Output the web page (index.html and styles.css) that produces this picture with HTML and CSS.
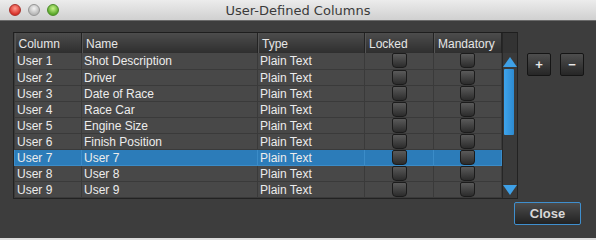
FILE: index.html
```html
<!DOCTYPE html>
<html lang="en">
<head>
    <meta charset="UTF-8">
    <title>User-Defined Columns</title>
    <link rel="stylesheet" href="styles.css">
</head>
<body>
    <div class="window">
        <div class="titlebar">
            <div class="lights">
                <span class="light red"></span>
                <span class="light gray"></span>
                <span class="light green"></span>
            </div>
            <div class="title">User-Defined Columns</div>
        </div>
        <div class="content">
            <div class="main">
                <div class="grid-wrap">
                    <table class="grid">
                        <colgroup>
                            <col class="c-col">
                            <col class="c-name">
                            <col class="c-type">
                            <col class="c-lock">
                            <col class="c-mand">
                        </colgroup>
                        <thead>
                            <tr>
                                <th>Column</th>
                                <th>Name</th>
                                <th>Type</th>
                                <th>Locked</th>
                                <th>Mandatory</th>
                            </tr>
                        </thead>
                        <tbody id="rows"></tbody>
                    </table>
                    <div class="scroll">
                        <div class="scroll-head"></div>
                        <div class="scroll-track">
                            <span class="arrow up"></span>
                            <span class="thumb"></span>
                            <span class="arrow down"></span>
                        </div>
                    </div>
                </div>
                <div class="side">
                    <button class="small">+</button>
                    <button class="small">&minus;</button>
                </div>
            </div>
            <div class="footer">
                <button class="close">Close</button>
            </div>
        </div>
    </div>

    <script>
        const nomes = ['Shot Description', 'Driver', 'Date of Race', 'Race Car', 'Engine Size', 'Finish Position', 'User 7', 'User 8', 'User 9'];
        const tbody = document.getElementById('rows');
        nomes.forEach((nome, i) => {
            let tr = document.createElement('tr');
            if (i === 6) tr.className = 'selected';
            tr.innerHTML = `<td>User ${i + 1}</td><td>${nome}</td><td>Plain Text</td><td class="center"><span class="check"></span></td><td class="center"><span class="check"></span></td>`;
            tbody.appendChild(tr);
        });
    </script>
</body>
</html>
```

FILE: styles.css
```css
body {
    margin: 0;
    background-color: #3d3d3d;
    font-family: 'Liberation Sans', Arial, sans-serif;
    color: #ececec;
}
.window {
    width: 596px;
    height: 240px;
    display: flex;
    flex-direction: column;
    border-bottom: 2px solid #dedede;
    box-sizing: border-box;
}
.titlebar {
    height: 20px;
    flex-shrink: 0;
    display: flex;
    align-items: center;
    background: linear-gradient(#ececec, #d0d0d0);
    border-bottom: 1px solid #6a6a6a;
    position: relative;
}
.lights {
    display: flex;
    gap: 7px;
    padding-left: 9px;
}
.light {
    width: 12px;
    height: 12px;
    border-radius: 50%;
    box-sizing: border-box;
}
.red {
    background: radial-gradient(circle at 50% 35%, #ff9a8e, #d8322a 70%);
    border: 1px solid #a8302a;
}
.gray {
    background: radial-gradient(circle at 50% 35%, #f4f4f4, #b8b8b8 70%);
    border: 1px solid #959595;
}
.green {
    background: radial-gradient(circle at 50% 35%, #c8f48a, #5aa82a 70%);
    border: 1px solid #4c8a2a;
}
.title {
    position: absolute;
    left: 0;
    right: 0;
    text-align: center;
    font-family: 'DejaVu Sans', sans-serif;
    font-size: 13px;
    color: #3a3a3a;
}
.content {
    flex: 1;
    padding: 11px 13px 0 13px;
}
.main {
    display: flex;
    gap: 9px;
}
.grid-wrap {
    display: flex;
    border: 1px solid #222;
    border-top-color: #1e1e1e;
}
.grid {
    border-collapse: collapse;
    table-layout: fixed;
    width: 487px;
    font-size: 12px;
    background-color: #484848;
}
.c-col { width: 67px; }
.c-name { width: 176px; }
.c-type { width: 107px; }
.c-lock { width: 69px; }
.c-mand { width: 68px; }
th {
    height: 20px;
    padding: 2px 4px 0;
    text-align: left;
    font-weight: normal;
    color: #e6e6e6;
    background: linear-gradient(#4c4c4c, #2e2e2e);
    border-right: 1px solid #232323;
    box-shadow: inset 1px 0 0 #555;
    box-sizing: border-box;
}
td {
    height: 16px;
    padding: 2px 2px 0;
    border: 1px solid #3a3a3a;
    border-top: none;
    box-sizing: border-box;
    white-space: nowrap;
    line-height: 13px;
    vertical-align: top;
}
td.center {
    text-align: center;
    padding-top: 0;
}
tr.selected td {
    background-color: #2c7cb9;
    border-color: #3b8cc8;
}
.check {
    display: inline-block;
    width: 15px;
    height: 15px;
    vertical-align: top;
    border-radius: 2px 2px 4px 4px;
    box-sizing: border-box;
    border: 1px solid #1b1b1b;
    background: linear-gradient(#5a5a5a, #2c2c2c);
}
.scroll {
    width: 14px;
    display: flex;
    flex-direction: column;
    border-left: 1px solid #262626;
}
.scroll-head {
    height: 20px;
    background-color: #333;
}
.scroll-track {
    flex: 1;
    background-color: #3a3a3a;
    display: flex;
    flex-direction: column;
    align-items: center;
    padding-top: 4px;
}
.arrow {
    width: 0;
    height: 0;
    border-left: 7px solid transparent;
    border-right: 7px solid transparent;
}
.arrow.up {
    border-bottom: 10px solid #3ea0e6;
}
.arrow.down {
    border-top: 10px solid #3ea0e6;
    margin-top: auto;
    margin-bottom: 3px;
}
.thumb {
    width: 10px;
    height: 66px;
    margin-top: 2px;
    margin-right: 3px;
    background: linear-gradient(90deg, #3ea4ec, #2d8ad0);
    border-radius: 1px;
}
.side {
    display: flex;
    gap: 9px;
    padding-top: 21px;
    align-items: flex-start;
}
button {
    font-family: 'Liberation Sans', Arial, sans-serif;
    color: #e8e8e8;
    cursor: pointer;
}
.small {
    width: 24px;
    height: 23px;
    padding: 0;
    font-size: 13px;
    font-weight: bold;
    border: 1px solid #151515;
    border-radius: 2px;
    background: linear-gradient(#4e4e4e, #262626);
}
.footer {
    display: flex;
    justify-content: flex-end;
    padding-top: 3px;
    padding-right: 2px;
}
.close {
    width: 67px;
    height: 23px;
    padding: 0;
    font-size: 13px;
    font-weight: bold;
    border: 1px solid #3f8fce;
    border-radius: 2px;
    background: linear-gradient(#4c4c4c, #222);
    color: #d8d8d8;
}
```
